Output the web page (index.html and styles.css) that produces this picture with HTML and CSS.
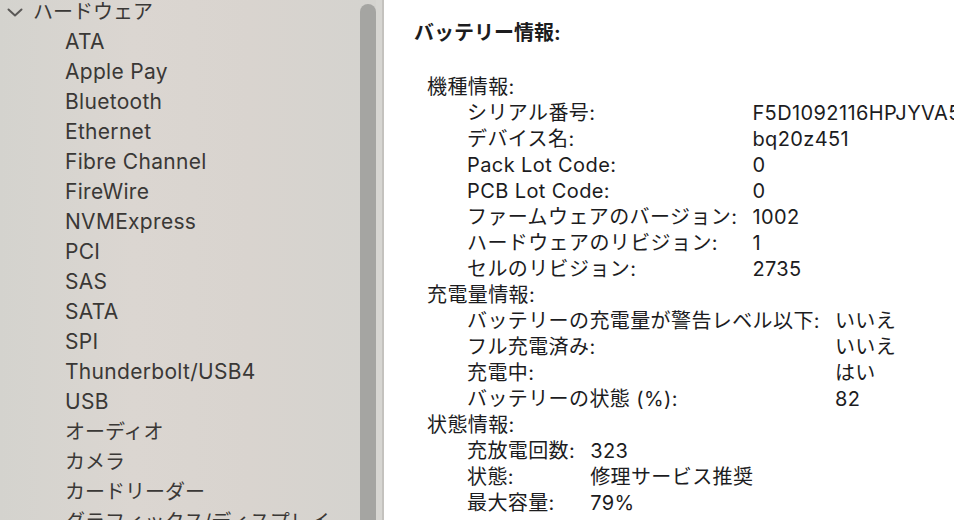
FILE: index.html
```html
<!DOCTYPE html>
<html lang="ja">
<head>
  <meta charset="UTF-8" />
  <meta name="viewport" content="width=device-width, initial-scale=1.0" />
  <title>システム情報</title>
  <link rel="stylesheet" href="styles.css">
</head>
<body>
  <div class="window">
    <!-- サイドバー -->
    <div class="sidebar">
      <ul class="tree">
        <li class="group">
          <svg class="chevron" width="16" height="9" viewBox="0 0 16 9"><polyline points="1.5,1.5 8,7.5 14.5,1.5" /></svg>
          ハードウェア
        </li>
        <li lang="en">ATA</li>
        <li lang="en">Apple Pay</li>
        <li lang="en">Bluetooth</li>
        <li lang="en">Ethernet</li>
        <li lang="en">Fibre Channel</li>
        <li lang="en">FireWire</li>
        <li lang="en">NVMExpress</li>
        <li lang="en">PCI</li>
        <li lang="en">SAS</li>
        <li lang="en">SATA</li>
        <li lang="en">SPI</li>
        <li lang="en">Thunderbolt/USB4</li>
        <li lang="en">USB</li>
        <li>オーディオ</li>
        <li>カメラ</li>
        <li>カードリーダー</li>
        <li>グラフィックス/ディスプレイ</li>
      </ul>
      <div class="scroll-track"><div class="scroll-thumb"></div></div>
    </div>

    <!-- 詳細 -->
    <div class="detail">
      <h1>バッテリー情報:</h1>

      <div class="section">機種情報:</div>
      <div class="rows">
        <span>シリアル番号:</span><span>F5D1092116HPJYVA5</span>
        <span>デバイス名:</span><span>bq20z451</span>
        <span>Pack Lot Code:</span><span>0</span>
        <span>PCB Lot Code:</span><span>0</span>
        <span>ファームウェアのバージョン:</span><span>1002</span>
        <span>ハードウェアのリビジョン:</span><span>1</span>
        <span>セルのリビジョン:</span><span>2735</span>
      </div>

      <div class="section">充電量情報:</div>
      <div class="rows">
        <span>バッテリーの充電量が警告レベル以下:</span><span>いいえ</span>
        <span>フル充電済み:</span><span>いいえ</span>
        <span>充電中:</span><span>はい</span>
        <span>バッテリーの状態 (%):</span><span>82</span>
      </div>

      <div class="section">状態情報:</div>
      <div class="rows">
        <span>充放電回数:</span><span>323</span>
        <span>状態:</span><span>修理サービス推奨</span>
        <span>最大容量:</span><span>79%</span>
      </div>
    </div>
  </div>
</body>
</html>
```

FILE: styles.css
```css
body { margin: 0; font-family: "Inter", "Noto Sans CJK JP", sans-serif; background: #fff; }
.window { display: flex; height: 520px; overflow: hidden; }

.sidebar { width: 382px; flex-shrink: 0; display: flex; border-right: 2px solid #c4c2be; background: linear-gradient(90deg, #d4d3ce 0%, #dbd6d1 35%, #d9d4cf 65%, #d4d3cf 100%); }
.tree { flex: 1; list-style: none; margin: -3px 0 0; padding: 0; color: #3a3836; font-size: 20px; }
.tree li { height: 30px; line-height: 30px; padding-left: 65px; white-space: nowrap; }
.tree li:lang(en) { font-size: 21px; letter-spacing: 0.3px; }
.tree .group { display: flex; align-items: center; padding-left: 7px; gap: 10px; }
.chevron { fill: none; stroke: #5a5856; stroke-width: 2; stroke-linecap: round; stroke-linejoin: round; }
.scroll-track { width: 22px; padding-top: 4px; background: linear-gradient(90deg, transparent 16px, #d7d6d2 16px); }
.scroll-thumb { width: 16px; height: 600px; border-radius: 8px; background: #a5a5a2; }

.detail { flex: 1; min-width: 0; overflow: hidden; padding: 20px 0 0 30px; color: #1c1c1e; font-size: 20px; letter-spacing: 0.4px; }
.detail h1 { margin: 0 0 28px; font-size: 20px; font-weight: 700; line-height: 26px; letter-spacing: 0; }
.section { margin-left: 13px; line-height: 26px; white-space: nowrap; }
.rows { display: grid; grid-template-columns: max-content max-content; column-gap: 15px; margin-left: 53px; line-height: 26px; white-space: nowrap; }
```
